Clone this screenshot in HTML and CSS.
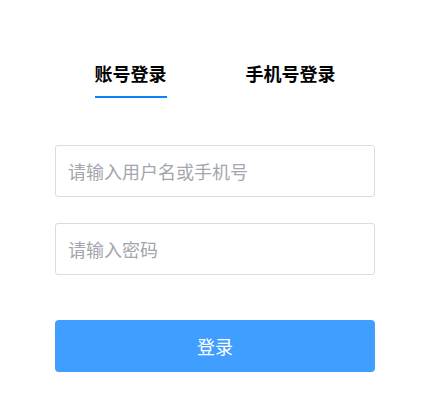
FILE: index.html
```html
<!DOCTYPE html>
<html lang="zh-CN">
<head>
<meta charset="utf-8">
<title>登录</title>
<link rel="stylesheet" href="styles.css">
</head>
<body>
<div class="login">
  <div class="tabs">
    <div class="tab active">账号登录</div>
    <div class="tab">手机号登录</div>
  </div>
  <form class="form">
    <input class="field" type="text" placeholder="请输入用户名或手机号">
    <input class="field" type="password" placeholder="请输入密码">
    <button class="submit" type="button">登录</button>
  </form>
</div>
</body>
</html>
```

FILE: styles.css
```css
html, body {
  margin: 0;
  padding: 0;
  background: #ffffff;
}
body {
  font-family: "Microsoft YaHei", "Noto Sans CJK SC", "Noto Sans", sans-serif;
}
.login {
  width: 320px;
  margin-left: 55px;
  padding-top: 61px;
}
.tabs {
  display: flex;
  justify-content: center;
  gap: 79px;
}
.tab {
  font-size: 18px;
  line-height: 24px;
  font-weight: 700;
  color: #000000;
  padding-bottom: 11px;
  border-bottom: 2px solid transparent;
}
.tab.active {
  border-bottom-color: #0a84f5;
}
.form {
  display: flex;
  flex-direction: column;
  margin: 47px 0 0;
}
.field {
  box-sizing: border-box;
  height: 52px;
  width: 100%;
  margin: 0 0 26px;
  padding: 0 12px;
  border: 1px solid #d9dce3;
  border-radius: 3px;
  font-family: inherit;
  font-size: 18px;
  color: #333;
  outline: none;
  background: #fff;
}
.field::placeholder {
  color: #a3a6ae;
}
.form .field:nth-child(2) {
  margin-bottom: 45px;
}
.submit {
  height: 52px;
  width: 100%;
  border: none;
  border-radius: 4px;
  background: #409eff;
  color: #ffffff;
  font-family: inherit;
  font-size: 18px;
  cursor: pointer;
}
```
